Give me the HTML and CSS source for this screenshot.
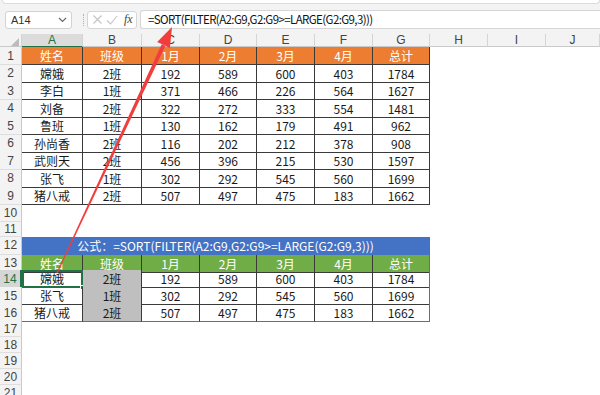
FILE: index.html
```html
<!DOCTYPE html>
<html lang="zh">
<head>
<meta charset="utf-8">
<title>Sheet</title>
<link rel="stylesheet" href="styles.css">
</head>
<body>
<div class="top">
  <div class="topstrip"></div>
  <div class="fbar">
    <div class="namebox"><span>A14</span>
      <svg class="chev" width="9" height="6" viewBox="0 0 9 6"><path d="M1 1l3.5 3.5L8 1" fill="none" stroke="#666" stroke-width="1.1"/></svg>
    </div>
    <div class="grip"></div>
    <div class="fnbox">
      <svg width="11" height="11" viewBox="0 0 11 11"><path d="M1.5 1.5l8 8M9.5 1.5l-8 8" stroke="#c4c4c4" stroke-width="1.1" fill="none"/></svg>
      <svg width="12" height="10" viewBox="0 0 12 10"><path d="M1 5.5l3.5 3.5L11 1" stroke="#c4c4c4" stroke-width="1.1" fill="none"/></svg>
      <span class="fx">fx</span>
    </div>
    <div class="formula">=SORT(FILTER(A2:G9,G2:G9&gt;=LARGE(G2:G9,3)))</div>
  </div>
</div>

<div class="sheet">
  <div class="row colhead">
    <div class="corner"><span class="tri"></span></div>
    <div class="ch sel">A</div><div class="ch">B</div><div class="ch">C</div><div class="ch">D</div><div class="ch">E</div><div class="ch">F</div><div class="ch">G</div><div class="ch">H</div><div class="ch">I</div><div class="ch">J</div>
  </div>

  <div class="row r175">
    <div class="rh">1</div>
    <div class="c or">姓名</div><div class="c or">班级</div><div class="c or">1月</div><div class="c or">2月</div><div class="c or">3月</div><div class="c or">4月</div><div class="c or last">总计</div>
    <div class="e"></div><div class="e"></div><div class="e"></div>
  </div>
  <div class="row r175">
    <div class="rh">2</div>
    <div class="c">嫦娥</div><div class="c">2班</div><div class="c">192</div><div class="c">589</div><div class="c">600</div><div class="c">403</div><div class="c last">1784</div>
    <div class="e"></div><div class="e"></div><div class="e"></div>
  </div>
  <div class="row r175">
    <div class="rh">3</div>
    <div class="c">李白</div><div class="c">1班</div><div class="c">371</div><div class="c">466</div><div class="c">226</div><div class="c">564</div><div class="c last">1627</div>
    <div class="e"></div><div class="e"></div><div class="e"></div>
  </div>
  <div class="row r175">
    <div class="rh">4</div>
    <div class="c">刘备</div><div class="c">2班</div><div class="c">322</div><div class="c">272</div><div class="c">333</div><div class="c">554</div><div class="c last">1481</div>
    <div class="e"></div><div class="e"></div><div class="e"></div>
  </div>
  <div class="row r175">
    <div class="rh">5</div>
    <div class="c">鲁班</div><div class="c">1班</div><div class="c">130</div><div class="c">162</div><div class="c">179</div><div class="c">491</div><div class="c last">962</div>
    <div class="e"></div><div class="e"></div><div class="e"></div>
  </div>
  <div class="row r175">
    <div class="rh">6</div>
    <div class="c">孙尚香</div><div class="c">2班</div><div class="c">116</div><div class="c">202</div><div class="c">212</div><div class="c">378</div><div class="c last">908</div>
    <div class="e"></div><div class="e"></div><div class="e"></div>
  </div>
  <div class="row r175">
    <div class="rh">7</div>
    <div class="c">武则天</div><div class="c">2班</div><div class="c">456</div><div class="c">396</div><div class="c">215</div><div class="c">530</div><div class="c last">1597</div>
    <div class="e"></div><div class="e"></div><div class="e"></div>
  </div>
  <div class="row r175">
    <div class="rh">8</div>
    <div class="c">张飞</div><div class="c">1班</div><div class="c">302</div><div class="c">292</div><div class="c">545</div><div class="c">560</div><div class="c last">1699</div>
    <div class="e"></div><div class="e"></div><div class="e"></div>
  </div>
  <div class="row r175">
    <div class="rh">9</div>
    <div class="c">猪八戒</div><div class="c">2班</div><div class="c">507</div><div class="c">497</div><div class="c">475</div><div class="c">183</div><div class="c last">1662</div>
    <div class="e"></div><div class="e"></div><div class="e"></div>
  </div>
  <div class="row r175">
    <div class="rh">10</div>
    <div class="e span7"></div><div class="e"></div><div class="e"></div><div class="e"></div>
  </div>
  <div class="row r15">
    <div class="rh">11</div>
    <div class="e span7"></div><div class="e"></div><div class="e"></div><div class="e"></div>
  </div>
  <div class="row r175">
    <div class="rh">12</div>
    <div class="title span7">公式：=SORT(FILTER(A2:G9,G2:G9&gt;=LARGE(G2:G9,3)))</div><div class="e"></div><div class="e"></div><div class="e"></div>
  </div>
  <div class="row r155">
    <div class="rh">13</div>
    <div class="c gr">姓名</div><div class="c gr">班级</div><div class="c gr">1月</div><div class="c gr">2月</div><div class="c gr">3月</div><div class="c gr">4月</div><div class="c gr blast">总计</div>
    <div class="e"></div><div class="e"></div><div class="e"></div>
  </div>
  <div class="row r17">
    <div class="rh selrow">14</div>
    <div class="c active">嫦娥<span class="handle"></span></div><div class="c gy">2班</div><div class="c">192</div><div class="c">589</div><div class="c">600</div><div class="c">403</div><div class="c blast">1784</div>
    <div class="e"></div><div class="e"></div><div class="e"></div>
  </div>
  <div class="row r17">
    <div class="rh">15</div>
    <div class="c">张飞</div><div class="c gy">1班</div><div class="c">302</div><div class="c">292</div><div class="c">545</div><div class="c">560</div><div class="c blast">1699</div>
    <div class="e"></div><div class="e"></div><div class="e"></div>
  </div>
  <div class="row r17 lastrow">
    <div class="rh">16</div>
    <div class="c">猪八戒</div><div class="c gy">2班</div><div class="c">507</div><div class="c">497</div><div class="c">475</div><div class="c">183</div><div class="c blast">1662</div>
    <div class="e"></div><div class="e"></div><div class="e"></div>
  </div>
  <div class="row r16"><div class="rh">17</div><div class="e span10"></div></div>
  <div class="row r16"><div class="rh">18</div><div class="e span10"></div></div>
  <div class="row r16"><div class="rh">19</div><div class="e span10"></div></div>
  <div class="row r16"><div class="rh">20</div><div class="e span10"></div></div>
  <div class="row r16"><div class="rh">21</div><div class="e span10"></div></div>
</div>

<svg class="arrow" width="600" height="395" viewBox="0 0 600 395">
  <polygon points="165.3,46.0 161.7,44.3 56.5,272.8 57.5,273.2" fill="#f23d3d"/>
  <polygon points="172,27 169.9,48.1 157.2,42.1" fill="#f23d3d"/>
</svg>
</body>
</html>
```

FILE: styles.css
```css
* { box-sizing: border-box; margin: 0; padding: 0; }

body {
  width: 600px;
  height: 395px;
  overflow: hidden;
  background: #fff;
  font-family: "Noto Sans CJK SC", "Noto Sans", sans-serif;
  color: #1a1a1a;
  position: relative;
}

/* ---------- top / formula bar ---------- */
.top {
  height: 34px;
  background: #f3f3f3;
  display: flex;
  flex-direction: column;
}
.topstrip {
  height: 4px;
  margin-left: 2px;
  background: #fff;
  border: 1px solid #dcdcdc;
  border-top: none;
  border-radius: 0 0 6px 6px;
}
.fbar {
  display: flex;
  align-items: center;
  height: 19px;
  margin-top: 6px;
  padding-left: 5px;
}
.namebox {
  width: 67px;
  height: 18px;
  background: #fff;
  border: 1px solid #d2d2d2;
  border-radius: 3px;
  display: flex;
  align-items: center;
  justify-content: space-between;
  padding: 0 4px 0 5px;
  font-family: "Liberation Sans", sans-serif;
  font-size: 11px;
  color: #333;
}
.grip {
  width: 1px;
  height: 12px;
  margin-left: 11px;
  border-left: 1px dotted #b0b0b0;
}
.fnbox {
  margin-left: 3px;
  width: 50px;
  height: 18px;
  background: #fff;
  border: 1px solid #d6d6d6;
  border-radius: 3px;
  display: flex;
  align-items: center;
  gap: 3px;
  padding-left: 4px;
}
.fx {
  font-family: "Liberation Serif", serif;
  font-style: italic;
  font-size: 12px;
  color: #444;
  margin-left: 3px;
}
.formula {
  margin-left: 3px;
  flex: 1;
  height: 19px;
  background: #fff;
  border: 1px solid #d6d6d6;
  border-right: none;
  border-radius: 3px 0 0 3px;
  padding-left: 7px;
  font-size: 11.5px;
  letter-spacing: -0.6px;
  line-height: 17px;
  color: #111;
  white-space: nowrap;
}

/* ---------- sheet ---------- */
.row {
  display: grid;
  grid-template-columns: 22px 61px 59px 58px 57px 58px 58px 57px 58px 58px 1fr;
}
.r175 { height: 17.5px; }
.r15 { height: 15px; }
.r155 { height: 15.5px; }
.r17 { height: 17px; }
.r16 { height: 16px; }

.colhead {
  height: 13px;
  background: #f3f3f3;
  border-bottom: 1px solid #c9c9c9;
}
.corner {
  position: relative;
  border-right: 1px solid #d4d4d4;
}
.tri {
  position: absolute;
  right: 2px;
  bottom: 2px;
  width: 0;
  height: 0;
  border-left: 8px solid transparent;
  border-bottom: 8px solid #bcbcbc;
}
.ch {
  border-right: 1px solid #d4d4d4;
  font-family: "Liberation Sans", sans-serif;
  font-size: 12px;
  line-height: 12px;
  text-align: center;
  color: #444;
}
.ch.sel {
  background: #dcdcdc;
  border-bottom: 2px solid #217346;
  color: #217346;
}

.rh {
  background: #f3f3f3;
  border-right: 1px solid #c9c9c9;
  border-bottom: 1px solid #dedede;
  font-family: "Liberation Sans", sans-serif;
  font-size: 12px;
  color: #444;
  display: flex;
  align-items: center;
  justify-content: center;
}
.rh.selrow {
  background: #d6d6d6;
  color: #217346;
  border-right: 2px solid #217346;
}

.c {
  border-right: 1px solid #3a3a3a;
  border-bottom: 1px solid #3a3a3a;
  font-size: 12px;
  display: flex;
  align-items: center;
  justify-content: center;
  white-space: nowrap;
  position: relative;
}
.c.or { background: #ed7d31; color: #fff; }
.c.gr { background: #70ad47; color: #fff; }
.c.gy { background: #bfbfbf; }
.c.blast { border-right-color: #4472c4; }
.lastrow .c { border-bottom-color: #4472c4; }

.c.active {
  outline: 2px solid #217346;
  outline-offset: -2px;
}
.handle {
  position: absolute;
  right: -3px;
  bottom: -3px;
  width: 5px;
  height: 5px;
  background: #217346;
  border: 1px solid #fff;
}

.e { background: #fff; }
.span7 { grid-column: span 7; }
.span10 { grid-column: span 10; }

.title {
  background: #4472c4;
  color: #fff;
  font-size: 12px;
  display: flex;
  align-items: center;
  justify-content: center;
  white-space: nowrap;
  border-right: 1px solid #4472c4;
}

/* ---------- annotation arrow ---------- */
.arrow {
  position: absolute;
  left: 0;
  top: 0;
  pointer-events: none;
}
```
